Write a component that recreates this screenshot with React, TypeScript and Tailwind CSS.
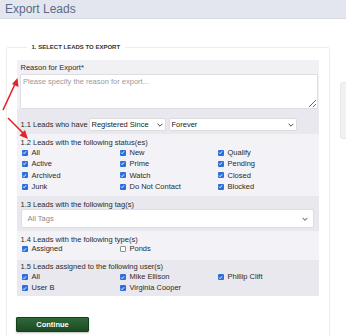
import React from "react";

type Box = { label: string; checked?: boolean };

const statuses: Box[][] = [
  [{ label: "All", checked: true }, { label: "New", checked: true }, { label: "Qualify", checked: true }],
  [{ label: "Active", checked: true }, { label: "Prime", checked: true }, { label: "Pending", checked: true }],
  [{ label: "Archived", checked: true }, { label: "Watch", checked: true }, { label: "Closed", checked: true }],
  [{ label: "Junk", checked: true }, { label: "Do Not Contact", checked: true }, { label: "Blocked", checked: true }],
];

const users: Box[][] = [
  [{ label: "All", checked: true }, { label: "Mike Ellison", checked: true }, { label: "Phillip Clift", checked: true }],
  [{ label: "User B", checked: true }, { label: "Virginia Cooper", checked: true }],
];

function Check({ checked }: { checked?: boolean }) {
  if (!checked) {
    return <span className="inline-block w-[6px] h-[6px] border border-[#8f8f8f] bg-white rounded-[1px] shrink-0" />;
  }
  return (
    <span className="inline-flex items-center justify-center w-[6px] h-[6px] bg-[#2c6fd8] rounded-[1px] shrink-0">
      <svg width="5" height="5" viewBox="0 0 10 10">
        <path d="M2 5.2 L4.2 7.4 L8.2 2.6" fill="none" stroke="white" strokeWidth="1.8" />
      </svg>
    </span>
  );
}

function Row({ items }: { items: Box[] }) {
  return (
    <div className="grid grid-cols-[98px_98px_1fr] h-[11.33px] pl-[5px]">
      {items.map((it) => (
        <div key={it.label} className="flex items-center gap-[4px]">
          <Check checked={it.checked} />
          <span className="text-[7.5px] text-[#2a2a2a] leading-none whitespace-nowrap">{it.label}</span>
        </div>
      ))}
    </div>
  );
}

function Chevron() {
  return (
    <svg width="6" height="4" viewBox="0 0 10 6" className="shrink-0">
      <path d="M1 1 L5 5 L9 1" fill="none" stroke="#444" strokeWidth="1.6" />
    </svg>
  );
}

export default function App() {
  return (
    <div className="relative w-[346px] h-[336px] overflow-hidden bg-white font-['Liberation_Sans',Arial,sans-serif]">
      {/* page header */}
      <header className="h-[19px] bg-[#e3e6ee] border-b border-[#d8dce5] pl-[5px] flex items-center">
        <h1 className="text-[12px] text-[#5b6a86] leading-none">Export Leads</h1>
      </header>

      <div className="flex">
        <main className="w-[334px] pl-[5.5px] pt-[25px] shrink-0">
          <fieldset className="w-[323px] border border-[#ececec] rounded-[2px] px-[10px] pb-[40px]">
            <legend className="ml-[10px] px-[5px] text-[6px] font-bold text-[#333] leading-[6px]">
              1. SELECT LEADS TO EXPORT
            </legend>

            <div className="mt-[10px] w-[302px]">
              {/* reason */}
              <div className="bg-[#f1f0f5] h-[49px] pl-[3.5px] pr-[1px] pt-[2.5px]">
                <div className="text-[7.5px] text-[#2a2a2a] leading-[9px] pl-[0.5px]">Reason for Export*</div>
                <textarea
                  placeholder="Please specify the reason for export..."
                  className="mt-[2px] block w-full h-[35px] bg-white border border-[#dedde3] rounded-[1px] px-[2px] py-[2px] text-[7.5px] leading-[9px] placeholder:text-[#9a9a9a] outline-none"
                />
              </div>

              {/* 1.1 */}
              <div className="bg-[#e9e8ee] h-[25px] pl-[4px] flex items-end pb-[3px] gap-[3px]">
                <span className="text-[7.5px] text-[#2a2a2a] leading-[13px] w-[65px] whitespace-nowrap">1.1 Leads who have</span>
                <div className="w-[77px] h-[13px] bg-white border border-[#dcdcdc] rounded-[2px] flex items-center justify-between px-[2px]">
                  <span className="text-[7.5px] text-[#222] leading-none">Registered Since</span>
                  <Chevron />
                </div>
                <div className="w-[128px] h-[13px] bg-white border border-[#dcdcdc] rounded-[2px] flex items-center justify-between px-[2px]">
                  <span className="text-[7.5px] text-[#222] leading-none">Forever</span>
                  <Chevron />
                </div>
              </div>

              {/* 1.2 */}
              <div className="bg-[#f3f2f7] h-[62px] pl-[4px] pt-[4px]">
                <div className="text-[7.5px] text-[#2a2a2a] leading-[9px]">1.2 Leads with the following status(es)</div>
                <div className="-ml-[4px]">
                  {statuses.map((r, i) => (
                    <Row key={i} items={r} />
                  ))}
                </div>
              </div>

              {/* 1.3 */}
              <div className="bg-[#e9e8ee] h-[35px] pl-[4px] pr-[5px] pt-[3.5px]">
                <div className="text-[7.5px] text-[#2a2a2a] leading-[9px]">1.3 Leads with the following tag(s)</div>
                <div className="mt-[0.5px] h-[19px] bg-white border border-[#dddde2] rounded-[2px] flex items-center justify-between pl-[6px] pr-[5px]">
                  <span className="text-[7.5px] text-[#8a8a8a] leading-none">All Tags</span>
                  <svg width="6" height="4" viewBox="0 0 10 6">
                    <path d="M1 1 L5 5 L9 1" fill="none" stroke="#888" strokeWidth="1.8" />
                  </svg>
                </div>
              </div>

              {/* 1.4 */}
              <div className="bg-[#f3f2f7] h-[29px] pl-[4px] pt-[3.5px]">
                <div className="text-[7.5px] text-[#2a2a2a] leading-[9px]">1.4 Leads with the following type(s)</div>
                <div className="-ml-[4px]">
                  <Row items={[{ label: "Assigned", checked: true }, { label: "Ponds" }]} />
                </div>
              </div>

              {/* 1.5 */}
              <div className="bg-[#e9e8ee] h-[36px] pl-[4px] pt-[2px]">
                <div className="text-[7.5px] text-[#2a2a2a] leading-[9px]">1.5 Leads assigned to the following user(s)</div>
                <div className="-ml-[4px] mt-[0.5px]">
                  {users.map((r, i) => (
                    <div key={i} className="h-[11px] overflow-visible">
                      <Row items={r} />
                    </div>
                  ))}
                </div>
              </div>
            </div>

            <button className="mt-[21px] -ml-[0.5px] w-[73px] h-[15px] bg-gradient-to-b from-[#2f6a38] to-[#1c4a24] border border-[#173d1d] rounded-[1px] shadow-[0_1px_2px_rgba(0,0,0,0.25)] text-white text-[7.5px] font-bold leading-none">
              Continue
            </button>
          </fieldset>
        </main>

        <aside className="ml-[6px] mt-[63px] w-[20px] h-[57px] bg-[#f1f1f4] border border-[#e6e6ea] rounded-[3px] shrink-0" />
      </div>

      {/* red annotation arrows */}
      <svg className="absolute left-0 top-0 pointer-events-none" width="346" height="336" viewBox="0 0 346 336">
        <line x1="3" y1="110" x2="15.5" y2="83" stroke="#e3242b" strokeWidth="1.6" />
        <polygon points="17.5,78 18.5,87 12,84" fill="#e3242b" />
        <line x1="8" y1="118" x2="24" y2="134" stroke="#e3242b" strokeWidth="1.6" />
        <polygon points="28,139 19.5,135.5 25,130" fill="#e3242b" />
      </svg>
    </div>
  );
}
